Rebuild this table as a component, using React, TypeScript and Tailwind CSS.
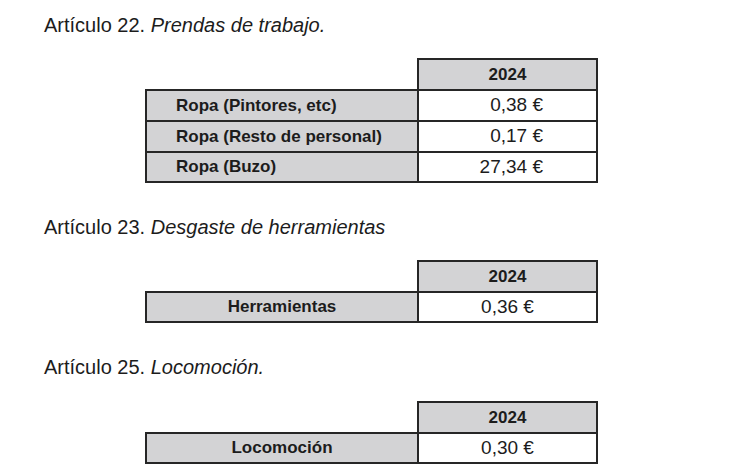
const font = { fontFamily: '"Liberation Sans", Arial, sans-serif' };

type Row = { label: string; value: string };

function Heading({ num, title }: { num: string; title: string }) {
  return (
    <p className="pl-[44px] text-[20px] leading-[22px] text-[#1c1c1c]">
      Artículo {num}. <span className="italic">{title}</span>
    </p>
  );
}

function PriceTable({ rows, centered }: { rows: Row[]; centered?: boolean }) {
  return (
    <div className="ml-[145px] text-[#1c1c1c]">
      {/* header */}
      <div className="flex h-[31px]">
        <div className="w-[272px]" />
        <div className="w-[181px] border-t-2 border-x-2 border-[#262626] bg-[#d3d3d5] flex items-center justify-center text-[17px] font-bold">
          2024
        </div>
      </div>
      {rows.map((r, i) => {
        const last = i === rows.length - 1;
        return (
          <div key={r.label} className={`flex ${last ? 'h-[32px]' : 'h-[31px]'}`}>
            <div
              className={`w-[272px] border-t-2 border-l-2 border-[#262626] bg-[#d3d3d5] flex items-center text-[17px] font-bold ${
                centered ? 'justify-center' : 'pl-[29px]'
              } ${last ? 'border-b-2' : ''}`}
            >
              {r.label}
            </div>
            <div
              className={`w-[181px] border-t-2 border-x-2 border-[#262626] bg-white flex items-center text-[19px] ${
                centered ? 'justify-center' : 'justify-end pr-[53px]'
              } ${last ? 'border-b-2' : ''}`}
            >
              {r.value}
            </div>
          </div>
        );
      })}
    </div>
  );
}

export default function App() {
  return (
    <div className="w-[744px] h-[470px] bg-white overflow-hidden pt-[14px]" style={font}>
      <Heading num="22" title="Prendas de trabajo." />
      <div className="mt-[22px]">
        <PriceTable
          rows={[
            { label: 'Ropa (Pintores, etc)', value: '0,38 €' },
            { label: 'Ropa (Resto de personal)', value: '0,17 €' },
            { label: 'Ropa (Buzo)', value: '27,34 €' },
          ]}
        />
      </div>

      <div className="mt-[33px]">
        <Heading num="23" title="Desgaste de herramientas" />
      </div>
      <div className="mt-[22px]">
        <PriceTable centered rows={[{ label: 'Herramientas', value: '0,36 €' }]} />
      </div>

      <div className="mt-[33px]">
        <Heading num="25" title="Locomoción." />
      </div>
      <div className="mt-[23px]">
        <PriceTable centered rows={[{ label: 'Locomoción', value: '0,30 €' }]} />
      </div>
    </div>
  );
}
